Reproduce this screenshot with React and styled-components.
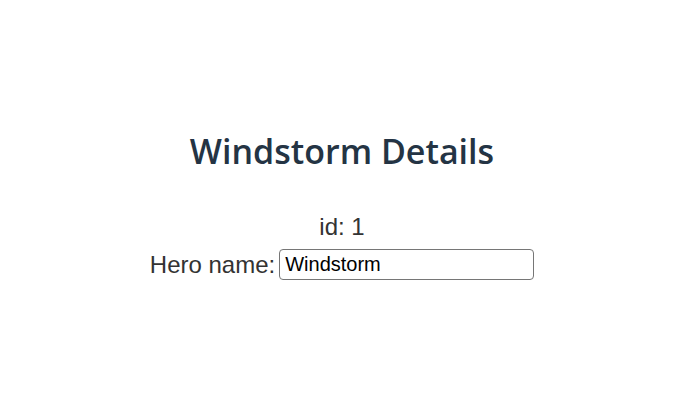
import React from 'react'
import styled, { createGlobalStyle } from 'styled-components'

const GlobalStyle = createGlobalStyle`
  body {
    margin: 0;
    background: #fff;
    font-family: "Liberation Sans", Arial, sans-serif;
    color: #333;
  }
`

function App() {
  return (
    <>
      <GlobalStyle />
      <Page>
        <Title>Windstorm Details</Title>
        <IdLine>id: 1</IdLine>
        <NameRow>
          <label htmlFor="hero-name">Hero name: </label>
          <NameInput id="hero-name" defaultValue="Windstorm" />
        </NameRow>
      </Page>
    </>
  )
}

export default App

const Page = styled.div`
  width: 100%;
  height: 100vh;
  box-sizing: border-box;
  padding-left: 11px;
  display: flex;
  flex-direction: column;
  align-items: center;
  justify-content: center;
`

const Title = styled.h2`
  font-family: "Open Sans", "Noto Sans", sans-serif;
  font-size: 34px;
  line-height: 44px;
  font-weight: 600;
  color: #243444;
  margin: 0 0 40px 0;
`

const IdLine = styled.div`
  font-size: 24px;
  line-height: 28px;
  margin-bottom: 8px;
`

const NameRow = styled.div`
  display: flex;
  align-items: center;
  gap: 4px;
  font-size: 24px;
`

const NameInput = styled.input`
  width: 255px;
  height: 31px;
  box-sizing: border-box;
  border: 1px solid #767676;
  border-radius: 4px;
  padding: 0 5px;
  font-family: "Liberation Sans", Arial, sans-serif;
  font-size: 20px;
  color: #000;
  outline: none;
`
